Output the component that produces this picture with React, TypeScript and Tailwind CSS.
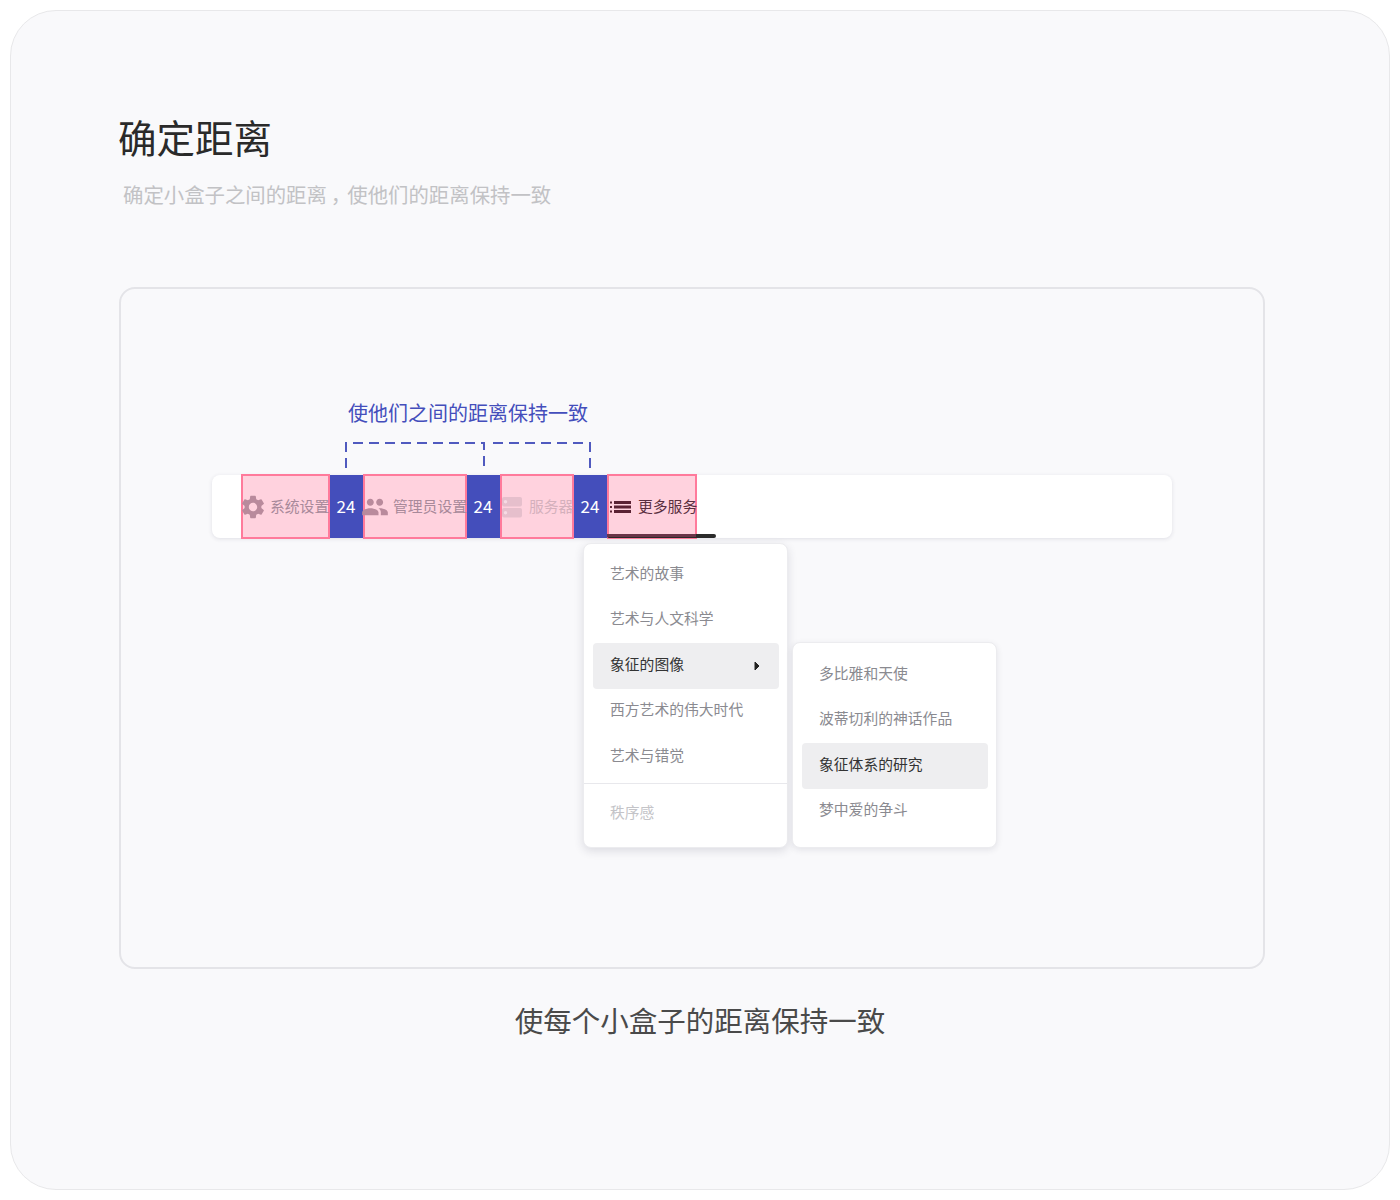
import React from 'react'
import { MdSettings, MdPeople } from 'react-icons/md'

const FONT = '"Noto Sans CJK SC", "Liberation Sans", sans-serif'

const PinkBox = ({ width, children }: { width: string; children: React.ReactNode }) => (
  <div className={`${width} h-[65px] -my-px shrink-0 flex items-center bg-[#ffd2de] border-2 border-[#ff7a9b] whitespace-nowrap`}>
    {children}
  </div>
)

const Gap = () => (
  <div className="w-[33px] h-[63px] shrink-0 flex items-center justify-center bg-[#444ebb] text-white text-[17px] pr-[1px] pb-[1px]">
    24
  </div>
)

const ServerIcon = () => (
  <svg width="24" height="24" viewBox="0 0 24 24" className="shrink-0 -ml-[2px]">
    <rect x="2" y="2" width="20" height="9.5" rx="2" fill="#e6bfcc" />
    <rect x="2" y="13" width="20" height="9.5" rx="2" fill="#e6bfcc" />
    <circle cx="5.5" cy="6.7" r="1.7" fill="#f7dbe4" />
    <circle cx="5.5" cy="17.7" r="1.7" fill="#f7dbe4" />
  </svg>
)

const ListIcon = () => (
  <svg width="22" height="12" viewBox="0 0 22 12" className="shrink-0 ml-[1px]">
    <rect x="0" y="0.5" width="2" height="2" fill="#5a2233" />
    <rect x="0" y="5" width="2" height="2" fill="#5a2233" />
    <rect x="0" y="9.5" width="2" height="2" fill="#5a2233" />
    <rect x="4" y="0" width="17" height="3" fill="#5a2233" />
    <rect x="4" y="4.5" width="17" height="3" fill="#5a2233" />
    <rect x="4" y="9" width="17" height="3" fill="#5a2233" />
  </svg>
)

const MenuRow = ({ label, active, arrow }: { label: string; active?: boolean; arrow?: boolean }) => (
  <div
    className={`h-[45.5px] pl-[17px] pr-[19px] flex items-center justify-between rounded-[4px] text-[14.8px] ${
      active ? 'bg-[#eeeef0] text-[#333333]' : 'text-[#8a8a90]'
    }`}
  >
    <span className="-mt-[4px]">{label}</span>
    {arrow && (
      <svg width="6" height="10" viewBox="0 0 6 10">
        <path d="M1 1 L5 5 L1 9 Z" fill="#222" stroke="#222" strokeWidth="1" strokeLinejoin="round" />
      </svg>
    )}
  </div>
)

export default function App() {
  return (
    <div className="w-[1400px] h-[1200px] p-[10px] bg-white" style={{ fontFamily: FONT }}>
      <div className="h-full rounded-[46px] border border-[#e8e8ea] bg-[#f9f9fb] pl-[108px] pt-[101px]">
        <h1 className="-ml-[1px] -mt-[3px] text-[38.5px] leading-[54px] text-[#2a2a2a]">确定距离</h1>
        <p className="ml-[4px] mt-[16px] text-[20.4px] leading-[30px] text-[#c2c2c5]">
          确定小盒子之间的距离
          <span className="inline-block w-[20.4px] text-center [font-feature-settings:'palt']">，</span>
          使他们的距离保持一致
        </p>

        <div className="mt-[78px] w-[1146px] h-[682px] rounded-[16px] border-2 border-[#e4e4e8] pt-[109px] pl-[91px]">
          <div className="ml-[136px] text-[20px] leading-[30px] text-[#444ebb] whitespace-nowrap">
            使他们之间的距离保持一致
          </div>

          <svg width="260" height="28" viewBox="0 0 260 28" className="ml-[133px] mt-[13px] block">
            <path d="M1 27 V2 H139 V27" fill="none" stroke="#505abf" strokeWidth="2" strokeDasharray="10 6" />
            <path d="M245 27 V2 H145" fill="none" stroke="#505abf" strokeWidth="2" strokeDasharray="10 6" />
          </svg>

          <div className="relative mt-[6px] w-[960px] h-[63px] rounded-[8px] bg-white shadow-[0_1px_4px_rgba(40,40,70,0.12)] pl-[29px] flex items-center">
            <PinkBox width="w-[89px]">
              <MdSettings size={28} className="text-[#b98a9c] shrink-0 -ml-[4px]" />
              <span className="ml-[3px] text-[14.8px] text-[#a8899a]">系统设置</span>
            </PinkBox>
            <Gap />
            <PinkBox width="w-[104px]">
              <MdPeople size={28} className="text-[#b98a9c] shrink-0 -ml-[4px]" />
              <span className="ml-[4px] text-[14.8px] text-[#a8899a]">管理员设置</span>
            </PinkBox>
            <Gap />
            <PinkBox width="w-[74px]">
              <ServerIcon />
              <span className="ml-[5px] text-[14.8px] text-[#d4b0bc]">服务器</span>
            </PinkBox>
            <Gap />
            <PinkBox width="w-[90px]">
              <ListIcon />
              <span className="ml-[6px] text-[14.8px] text-[#5a2f3e]">更多服务</span>
            </PinkBox>

            <div className="absolute left-[395px] top-[59px] w-[109px] h-[4px] rounded-full bg-[#2b2b2b]" />
            <div className="absolute left-[395px] top-[59px] w-[89px] h-[3px] bg-[#6b3448]" />

            <div className="absolute left-[371px] top-[68px] w-[205px] h-[305px] rounded-[8px] bg-white border border-[#ececef] shadow-[0_3px_10px_rgba(40,40,70,0.14)] pl-[9px] pr-[8px] pt-[8px]">
              <MenuRow label="艺术的故事" />
              <MenuRow label="艺术与人文科学" />
              <MenuRow label="象征的图像" active arrow />
              <MenuRow label="西方艺术的伟大时代" />
              <MenuRow label="艺术与错觉" />
              <div className="-ml-[9px] -mr-[8px] mt-[3px] h-px bg-[#e8e8ec]" />
              <div className="pl-[17px] h-[58px] flex items-center text-[14.8px] text-[#c4c4c8]">秩序感</div>
            </div>

            <div className="absolute left-[580px] top-[167px] w-[205px] h-[206px] rounded-[8px] bg-white border border-[#ececef] shadow-[0_2px_6px_rgba(40,40,70,0.1)] pl-[9px] pr-[8px] pt-[9px]">
              <MenuRow label="多比雅和天使" />
              <MenuRow label="波蒂切利的神话作品" />
              <MenuRow label="象征体系的研究" active />
              <MenuRow label="梦中爱的争斗" />
            </div>
          </div>
        </div>

        <p className="w-[1240px] -ml-[39px] mt-[30px] text-center text-[28.5px] leading-[42px] text-[#4a4a4a]">
          使每个小盒子的距离保持一致
        </p>
      </div>
    </div>
  )
}
